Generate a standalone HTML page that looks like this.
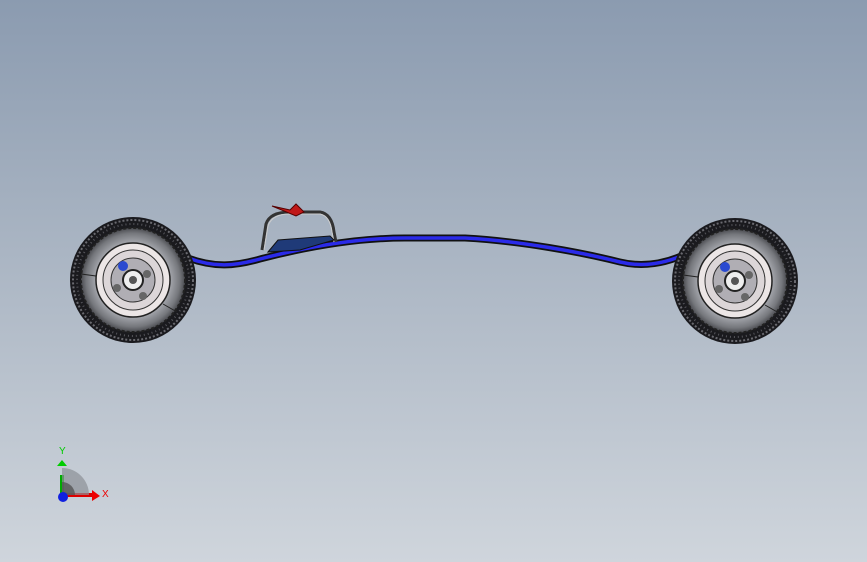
<!DOCTYPE html>
<html><head><style>
html,body{margin:0;padding:0;}
body{width:867px;height:562px;overflow:hidden;background:linear-gradient(#8b9bb0 0%,#aab5c3 45%,#cfd5dc 100%);}
svg{position:absolute;left:0;top:0;}
</style></head><body>
<svg width="867" height="562" viewBox="0 0 867 562">
<defs>
<radialGradient id="tire" cx="0.5" cy="0.5" r="0.5">
<stop offset="0.72" stop-color="#a2a4aa"/><stop offset="0.9" stop-color="#75777c"/><stop offset="1" stop-color="#4a4b50"/>
</radialGradient>
<g id="wheel">
<circle r="63" fill="#1a1a1e"/>
<circle r="60" fill="none" stroke="#6a6a70" stroke-width="2" stroke-dasharray="2 2"/>
<circle r="56" fill="none" stroke="#55555b" stroke-width="2" stroke-dasharray="1 3"/>
<circle r="52" fill="url(#tire)"/>
<circle r="52" fill="none" stroke="#222" stroke-width="2" stroke-dasharray="3 2"/>
<line x1="-52" y1="-6" x2="-37" y2="-4" stroke="#222"/>
<line x1="30" y1="24" x2="44" y2="32" stroke="#222"/>
<circle r="37" fill="#ece6e6" stroke="#222" stroke-width="1.5"/>
<circle r="30" fill="#dcd6d8" stroke="#333" stroke-width="1"/>
<circle r="22" fill="#b0aeb4" stroke="#333"/>
<circle r="10" fill="#eee" stroke="#222" stroke-width="2"/>
<circle r="4" fill="#555"/>
<circle cx="-10" cy="-14" r="5" fill="#2a4ad0"/>
<circle cx="14" cy="-6" r="4" fill="#666"/>
<circle cx="-16" cy="8" r="4" fill="#666"/>
<circle cx="10" cy="16" r="4" fill="#666"/>
</g>
</defs>
<path d="M188,258 C215,268 235,266 260,259 C310,246 360,238 405,238 L465,238 C520,241 580,252 620,262 C645,268 668,263 690,252" fill="none" stroke="#111" stroke-width="7"/>
<path d="M188,258 C215,268 235,266 260,259 C310,246 360,238 405,238 L465,238 C520,241 580,252 620,262 C645,268 668,263 690,252" fill="none" stroke="#2a2ae8" stroke-width="3.5"/>
<path d="M262,250 L266,224 Q270,212 290,212 L320,212 Q332,214 334,232 L336,242" fill="none" stroke="#333" stroke-width="3"/>
<path d="M264,250 L268,226 Q272,214 290,214 L320,214 Q330,216 332,232 L334,242" fill="none" stroke="#ccc" stroke-width="1"/>
<path d="M268,252 L278,240 L330,236 L334,240 L300,250 Z" fill="#1f3a78" stroke="#111"/>
<path d="M272,206 L290,210 L296,204 L304,212 L296,216 Z" fill="#c01818" stroke="#500" stroke-width="1"/>
<use href="#wheel" x="133" y="280"/>
<use href="#wheel" x="735" y="281"/>
<path d="M62,475 L62,495" stroke="#0a0" stroke-width="4"/>
<path d="M57,466 L62,460 L67,466 Z" fill="#0c0"/>
<path d="M62,495 L92,495" stroke="#d00" stroke-width="4"/>
<path d="M92,490 L100,496 L92,501 Z" fill="#e00"/>
<path d="M62,495 L62,468 A27,27 0 0 1 89,495 Z" fill="#8c9096" opacity="0.7"/>
<path d="M62,495 L62,482 A13,13 0 0 1 75,495 Z" fill="#555" opacity="0.8"/>
<circle cx="63" cy="497" r="5" fill="#1020e0"/>
<text x="59" y="454" font-family="Liberation Sans,sans-serif" font-size="10" fill="#0c0">Y</text>
<text x="102" y="497" font-family="Liberation Sans,sans-serif" font-size="10" fill="#e00">X</text>
</svg>
</body></html>
